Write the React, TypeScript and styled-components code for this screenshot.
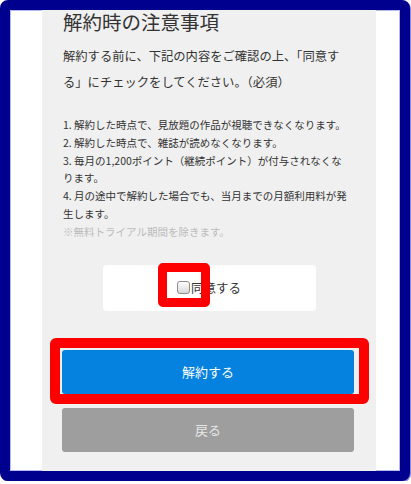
import React from "react";
import styled, { createGlobalStyle } from "styled-components";

const GlobalStyle = createGlobalStyle`
  html, body {
    margin: 0;
    padding: 0;
    background: #ffffff;
  }
  body {
    font-family: "Noto Sans CJK JP", "Noto Sans", sans-serif;
    color: #333333;
  }
`;

const Frame = styled.div`
  width: 410px;
  height: 481px;
  box-sizing: border-box;
  border: 10px solid #00008e;
  border-radius: 8px;
  background: #ffffff;
  padding-left: 32px;
  display: flex;
  overflow: hidden;
  box-shadow: 1px 1px 0 #8a8ad8, inset 0 0 0 1px #b8b8f0;
`;

const Panel = styled.section`
  width: 334px;
  box-sizing: border-box;
  background: #f0f0f0;
  padding: 0 21px;
  display: flex;
  flex-direction: column;
`;

const Title = styled.h2`
  margin: 0;
  font-size: 19.5px;
  line-height: 24px;
  font-weight: 400;
  color: #333333;
`;

const TextBlock = styled.div`
  padding-right: 5px;
`;

const Lead = styled.p`
  margin: 9px 0 0;
  font-size: 12.3px;
  line-height: 26px;
  color: #333333;
`;

const Notices = styled.ol`
  margin: 21px 0 0;
  padding: 0;
  list-style: none;
  font-size: 10.5px;
  line-height: 17.8px;
  color: #333333;
`;

const NoticeItem = styled.li<{ $muted?: boolean }>`
  color: ${(p) => (p.$muted ? "#bbbbbb" : "#333333")};
`;

const AgreeBox = styled.label`
  position: relative;
  margin: 24px auto 0;
  width: 213px;
  height: 46px;
  background: #ffffff;
  border-radius: 4px;
  display: flex;
  align-items: center;
  justify-content: center;
  font-size: 12.5px;
  color: #333333;
`;

const Check = styled.input`
  appearance: none;
  -webkit-appearance: none;
  width: 13px;
  height: 13px;
  margin: 0 1px 0 0;
  box-sizing: border-box;
  border: 1px solid #8c8c8c;
  border-radius: 3px;
  background: linear-gradient(#ffffff, #d8d8d8);
`;

const Highlight = styled.span<{ $inset: string; $w: number; $r: number }>`
  position: absolute;
  inset: ${(p) => p.$inset};
  border: ${(p) => p.$w}px solid #ff0000;
  border-radius: ${(p) => p.$r}px;
  box-sizing: border-box;
  pointer-events: none;
`;

const Actions = styled.div`
  margin-top: 39px;
  display: flex;
  flex-direction: column;
  gap: 14px;
`;

const ButtonWrap = styled.div`
  position: relative;
`;

const Button = styled.button<{ $variant: "primary" | "back" }>`
  display: block;
  width: 292px;
  height: 44px;
  margin-left: -1px;
  border: none;
  border-radius: 3px;
  font-family: "Noto Sans CJK JP", "Noto Sans", sans-serif;
  font-size: 13px;
  background: ${(p) => (p.$variant === "primary" ? "#0582e0" : "#9e9e9e")};
  color: ${(p) => (p.$variant === "primary" ? "#ffffff" : "#e6e6e6")};
`;

export default function App() {
  return (
    <>
      <GlobalStyle />
      <Frame>
        <Panel>
          <Title>解約時の注意事項</Title>
          <TextBlock>
            <Lead>
              解約する前に、下記の内容をご確認の上、「同意する」にチェックをしてください。（必須）
            </Lead>
            <Notices>
              <NoticeItem>1. 解約した時点で、見放題の作品が視聴できなくなります。</NoticeItem>
              <NoticeItem>2. 解約した時点で、雑誌が読めなくなります。</NoticeItem>
              <NoticeItem>3. 毎月の1,200ポイント（継続ポイント）が付与されなくなります。</NoticeItem>
              <NoticeItem>4. 月の途中で解約した場合でも、当月までの月額利用料が発生します。</NoticeItem>
              <NoticeItem $muted>※無料トライアル期間を除きます。</NoticeItem>
            </Notices>
          </TextBlock>
          <AgreeBox>
            <Check type="checkbox" />
            同意する
            <Highlight $inset="-2px auto auto 55px" $w={9} $r={5} style={{ width: 52, height: 44 }} />
          </AgreeBox>
          <Actions>
            <ButtonWrap>
              <Button $variant="primary">解約する</Button>
              <Highlight $inset="-12px -14px -10px -13px" $w={10} $r={6} />
            </ButtonWrap>
            <Button $variant="back">戻る</Button>
          </Actions>
        </Panel>
      </Frame>
    </>
  );
}
